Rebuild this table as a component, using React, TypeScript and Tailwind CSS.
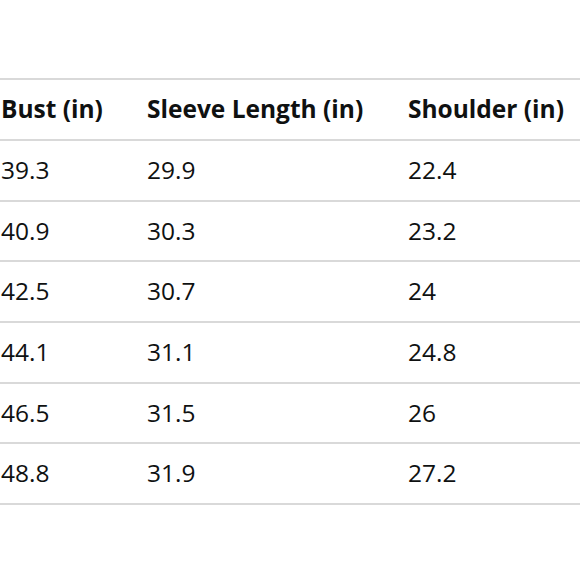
import React from "react";

const rows = [
  { h: "h-[61px]", c: ["39.3", "29.9", "22.4"] },
  { h: "h-[60px]", c: ["40.9", "30.3", "23.2"] },
  { h: "h-[61px]", c: ["42.5", "30.7", "24"] },
  { h: "h-[61px]", c: ["44.1", "31.1", "24.8"] },
  { h: "h-[60px]", c: ["46.5", "31.5", "26"] },
  { h: "h-[61px]", c: ["48.8", "31.9", "27.2"] },
];

export default function App() {
  return (
    <div
      className="w-[580px] h-[580px] bg-white overflow-hidden pt-[78px] text-[#0f1111]"
      style={{ fontFamily: '"Open Sans", "Noto Sans", sans-serif' }}
    >
      <div className="border-t-2 border-[#d9d9d9]">
        <div className="grid grid-cols-[146px_261px_1fr] h-[61px] items-center border-b-2 border-[#d9d9d9] font-bold text-[24.5px] pl-[1px]">
          <div>Bust (in)</div>
          <div>Sleeve Length (in)</div>
          <div>Shoulder (in)</div>
        </div>
        {rows.map((r, i) => (
          <div
            key={i}
            className={`grid grid-cols-[146px_261px_1fr] ${r.h} items-center border-b-2 border-[#d9d9d9] text-[24.5px] pl-[1px]`}
          >
            <div>{r.c[0]}</div>
            <div>{r.c[1]}</div>
            <div>{r.c[2]}</div>
          </div>
        ))}
      </div>
    </div>
  );
}
